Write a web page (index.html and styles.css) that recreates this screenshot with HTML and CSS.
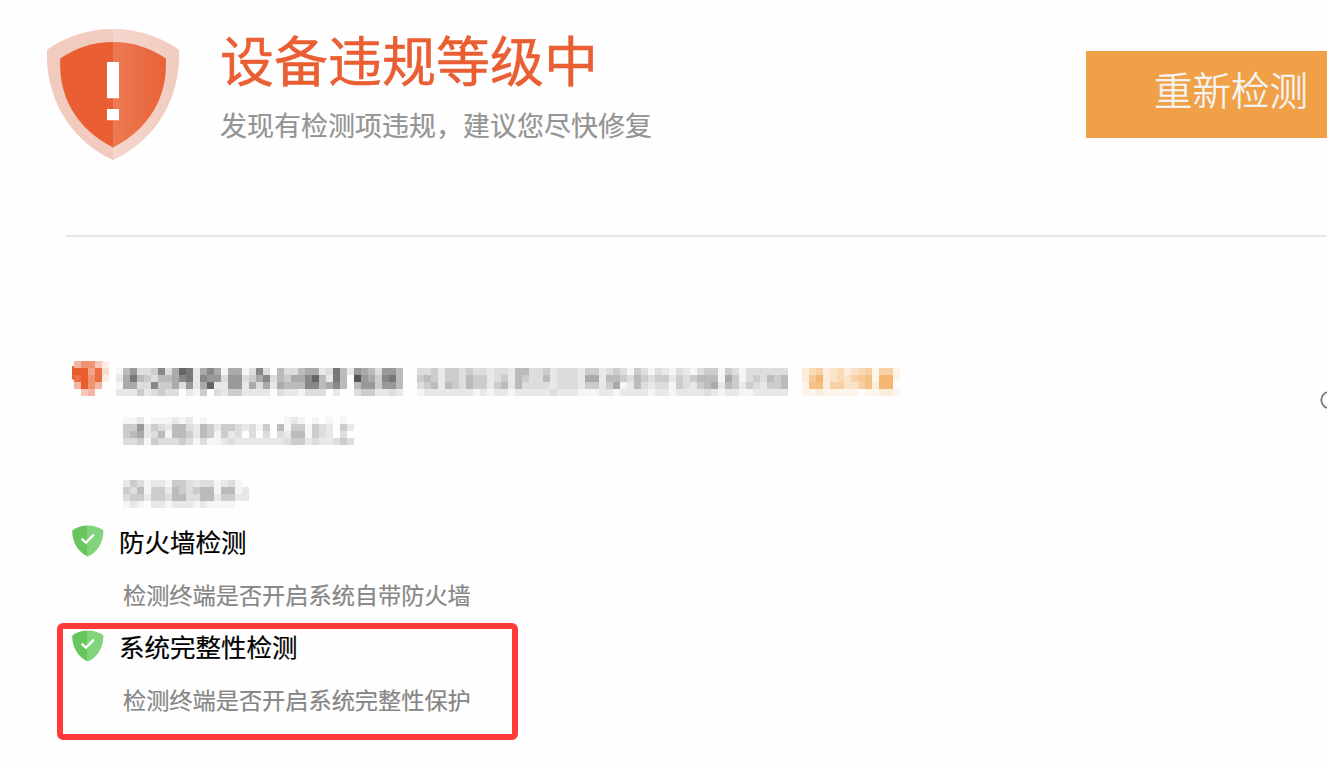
FILE: index.html
```html
<!DOCTYPE html>
<html lang="zh-CN">

<head>
    <meta charset="UTF-8">
    <meta name="viewport" content="width=device-width, initial-scale=1.0">
    <title>设备检测</title>
    <link rel="stylesheet" href="styles.css">
</head>

<body>
    <svg class="defs" width="0" height="0">
        <symbol id="shield-ok" viewBox="0 0 32 32">
            <path fill="#69c65d" d="M.2 5.4Q7 .5 15.8 .5V31.6C6 27 0 17 .2 5.4Z" />
            <path fill="#82d47c" d="M15.8 .5Q24.6 .5 31.4 5.4C31.6 17 25.6 27 15.8 31.6Z" />
            <path fill="none" stroke="#fff" stroke-width="2.3" d="M9.6 13.6L13.9 17.6L21.9 9.6" />
        </symbol>
    </svg>

    <header class="header">
        <svg class="level-icon" viewBox="0 0 132 131">
            <defs>
                <linearGradient id="shine">
                    <stop offset="0" stop-color="#ec7a53" />
                    <stop offset="1" stop-color="#e96236" />
                </linearGradient>
                <linearGradient id="rim">
                    <stop offset="0" stop-color="#f4d6cc" />
                    <stop offset="1" stop-color="#f2cbbf" />
                </linearGradient>
            </defs>
            <path fill="#f2cbbf" d="M0 20.7Q30 0 66 0V131C24 112 -2 70 0 20.7Z" />
            <path fill="url(#rim)" d="M66 0Q102 0 132 20.7C134 70 108 112 66 131Z" />
            <path fill="#e95e32" d="M13.3 29.5Q37 13 66 13V118.5C30 100 11 68 13.3 29.5Z" />
            <path fill="url(#shine)" d="M66 13Q95 13 118.8 29.5C121 68 102 100 66 118.5Z" />
            <path fill="#fff" d="M60 33h12v36.3h-12zM60 80h12v11.3h-12z" />
        </svg>
        <div class="summary">
            <h1>设备违规等级中</h1>
            <p>发现有检测项违规，建议您尽快修复</p>
        </div>
        <button class="recheck">重新检测</button>
    </header>

    <hr class="divider">

    <main class="list">
        <section class="item masked">
            <div class="mask-row">
                <div class="mosaic mask-shield" data-tone="red" data-rows="46631|99582|89681|49640| 34  "></div>
                <div class="mosaic mask-name" data-tone="gray" data-rows=" |fb9ddc8da67ea8afaafd8d bddbaaed7be9abd99b|ea7bcdbba87e899d99dca8dbcaa86be7b 59ac87b|faadd8ccad9ea6ee99eadaeabbb88ba8b b99c99b|eeecedcdd efc decceeee deefddd e  dcceede"></div>
                <div class="mosaic mask-text" data-tone="gray" data-rows=" |ddceccdcddeddebbddcedddeccedcdfcdfdefdefdccfcdfdddddd|cbceccdbccedcebcddbedddeaaebbcdbcdccecdcbbbfacfdcdbcb|dcbebcdbccecbebddddedddeccecafebdeddfcdecbaebcecdeccb|feeeeeeefefeefeeeeedeeefffeefeeeefeefeeeedefeeffeeeee"></div>
                <div class="mosaic" data-tone="orange" data-rows=" |24523423451551|26823435671881|17725533572880|11211111011221"></div>
            </div>
            <div class="mosaic mask-desc" data-tone="gray" data-rows="ffe fffefe f           fef f f f |cc9ecdebbdebceccdedfc bfccfcde ce|cbaedbfbbcebcfced d d debbfcde d |ddcfcdddcdfdffedeeeeeeedccedeedcd"></div>
            <div class="mosaic mask-version" data-tone="gray" data-rows="ecdfeefccdeddfedf |cdbfccebcdcbbfbbfe|dcceccdbbddbbeccee|fef eefeeefeffff  "></div>
            <svg class="more" width="7" height="20" viewBox="0 0 7 20">
                <circle cx="9.5" cy="10" r="8.2" fill="none" stroke="#777" stroke-width="1.8" />
            </svg>
        </section>

        <section class="item">
            <h2><svg class="state"><use href="#shield-ok" /></svg>防火墙检测</h2>
            <p>检测终端是否开启系统自带防火墙</p>
        </section>

        <section class="item marked">
            <h2><svg class="state"><use href="#shield-ok" /></svg>系统完整性检测</h2>
            <p>检测终端是否开启系统完整性保护</p>
        </section>
    </main>

    <script>
        // each character is the strength of one 7px cell
        const tones = {
            gray: c => ({ f: '#f5f5f5', e: '#e8e8e8' }[c] || '#' + c.repeat(6)),
            red: c => 'rgba(233, 93, 45, ' + c / 9 + ')',
            orange: c => 'rgba(240, 156, 60, ' + c / 11 + ')'
        };

        document.querySelectorAll('.mosaic').forEach(box => {
            const tone = tones[box.dataset.tone];
            box.dataset.rows.split('|').forEach(row => {
                const line = document.createElement('div');
                line.className = 'mosaic-line';
                for (const c of row) {
                    const cell = document.createElement('i');
                    if (c !== ' ') cell.style.background = tone(c);
                    line.appendChild(cell);
                }
                box.appendChild(line);
            });
        });
    </script>
</body>

</html>
```
FILE: styles.css
```css
*, *::after {
    box-sizing: border-box;
}

body {
    margin: 0;
    height: 762px;
    overflow: hidden;
    background: #fefefe;
    font-family: "Noto Sans CJK SC", sans-serif;
}

h1, h2, p {
    margin: 0;
    font-weight: 400;
    white-space: nowrap;
}

.defs {
    display: block;
}

.header {
    display: flex;
    align-items: flex-start;
    height: 235px;
    padding: 29px 0 0 47px;
}

.level-icon {
    width: 132px;
    height: 131px;
    flex: none;
}

.summary {
    margin-left: 41px;
}

.summary h1 {
    font-size: 54px;
    line-height: 60px;
    color: #e95e32;
    -webkit-text-stroke: 0.5px #e95e32;
}

.summary p {
    margin-top: 20px;
    font-size: 27px;
    line-height: 32px;
    color: #949494;
    -webkit-text-stroke: 0.2px #949494;
}

.recheck {
    width: 241px;
    height: 87px;
    margin: 22px 0 0 auto;
    padding: 0 0 12px 68px;
    border: 0;
    background: #f0a047;
    color: #f5f5f5;
    font-family: inherit;
    font-size: 38.5px;
    font-weight: 300;
    line-height: 75px;
    text-align: left;
    white-space: nowrap;
    -webkit-text-stroke: 0.5px #f5f5f5;
}

.divider {
    height: 2px;
    margin: 0 0 0 66px;
    border: 0;
    background: #e6e6e6;
}

.list {
    padding: 124px 0 0 72px;
}

.item {
    position: relative;
    height: 104.7px;
}

.item h2 {
    display: flex;
    align-items: center;
    height: 32px;
    font-size: 25.5px;
    line-height: 32px;
    color: #000;
    -webkit-text-stroke: 0.2px #000;
}

.state {
    width: 32px;
    height: 32px;
    margin-right: 15px;
    flex: none;
}

.item p {
    margin: 21px 0 0 51px;
    font-size: 23.2px;
    line-height: 32px;
    color: #868686;
    -webkit-text-stroke: 0.2px #868686;
}

/* pixelated rows */
.masked {
    height: 164px;
}

.mosaic-line {
    display: flex;
    height: 7px;
}

.mosaic-line i {
    width: 7px;
    flex: none;
}

.mask-row {
    display: flex;
    height: 35px;
}

.mask-shield {
    position: relative;
    width: 44px;
    padding-left: 2px;
}

/* left edge of the shield that sticks out of the cells */
.mask-shield::after {
    content: "";
    position: absolute;
    left: 0;
    top: 5px;
    width: 2px;
    height: 14px;
    border-radius: 2px 0 0 6px;
    background: #e95d2d;
}

.mask-name {
    margin-right: 14px;
}

.mask-text {
    margin-right: 14px;
}

.mask-desc {
    margin: 21px 0 0 51px;
}

.mask-version {
    margin: 35px 0 0 51px;
}

.more {
    position: absolute;
    top: 29px;
    right: 0;
}

/* red highlight frame */
.marked::after {
    content: "";
    position: absolute;
    left: -15px;
    top: -7px;
    width: 461px;
    height: 117px;
    border: 6px solid #ff3b3a;
    border-radius: 6px;
}
```
